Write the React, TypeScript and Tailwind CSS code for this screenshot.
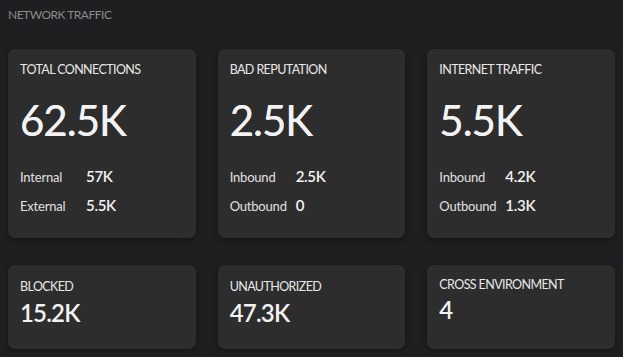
import React from "react";

type Row = { label: string; value: string };
type Big = { title: string; value: string; rows: Row[] };

const bigCards: Big[] = [
  { title: "TOTAL CONNECTIONS", value: "62.5K", rows: [{ label: "Internal", value: "57K" }, { label: "External", value: "5.5K" }] },
  { title: "BAD REPUTATION", value: "2.5K", rows: [{ label: "Inbound", value: "2.5K" }, { label: "Outbound", value: "0" }] },
  { title: "INTERNET TRAFFIC", value: "5.5K", rows: [{ label: "Inbound", value: "4.2K" }, { label: "Outbound", value: "1.3K" }] },
];

const smallCards = [
  { title: "BLOCKED", value: "15.2K", shift: false },
  { title: "UNAUTHORIZED", value: "47.3K", shift: false },
  { title: "CROSS ENVIRONMENT", value: "4", shift: true },
];

export default function App() {
  return (
    <div
      className="w-[623px] h-[357px] bg-[#1f1f21] px-[8px] overflow-hidden"
      style={{ fontFamily: "Lato, 'Noto Sans', sans-serif" }}
    >
      <div className="pt-[7px] text-[12px] leading-[16px] tracking-[-0.5px] text-[#8a8a8a]">NETWORK TRAFFIC</div>
      <div className="mt-[26px] grid grid-cols-3 gap-x-[22px]">
        {bigCards.map((c) => (
          <div key={c.title} className="h-[189px] rounded-[7px] bg-[#2d2d2d] shadow-[0_2px_6px_rgba(0,0,0,0.35)] px-[12px] pt-[13px]">
            <div className="text-[12.5px] leading-[16px] tracking-[-0.6px] text-[#e8e8e8]">{c.title}</div>
            <div className="mt-[21px] text-[42px] leading-[42px] tracking-[-1px] text-[#f2f2f2] [text-shadow:0_0_0.5px_#f2f2f2]">{c.value}</div>
            <div className="mt-[25px] flex flex-col gap-[9px]">
              {c.rows.map((r) => (
                <div key={r.label} className="flex items-baseline h-[20px] leading-[20px]">
                  <span className="w-[66px] text-[13px] tracking-[-0.2px] text-[#e0e0e0]">{r.label}</span>
                  <span className="text-[15px] font-semibold tracking-[-0.3px] text-[#f2f2f2]">{r.value}</span>
                </div>
              ))}
            </div>
          </div>
        ))}
      </div>
      <div className="mt-[27px] grid grid-cols-3 gap-x-[22px]">
        {smallCards.map((c) => (
          <div
            key={c.title}
            className={`h-[84px] rounded-[7px] bg-[#2d2d2d] shadow-[0_2px_6px_rgba(0,0,0,0.35)] px-[12px] ${c.shift ? "pt-[12px]" : "pt-[14px]"}`}
          >
            <div className="text-[12.5px] leading-[16px] tracking-[-0.6px] text-[#e8e8e8]">{c.title}</div>
            <div className={`${c.shift ? "mt-[3px]" : "mt-[4px]"} text-[24px] leading-[28px] font-semibold tracking-[-0.8px] text-[#f2f2f2]`}>{c.value}</div>
          </div>
        ))}
      </div>
    </div>
  );
}
